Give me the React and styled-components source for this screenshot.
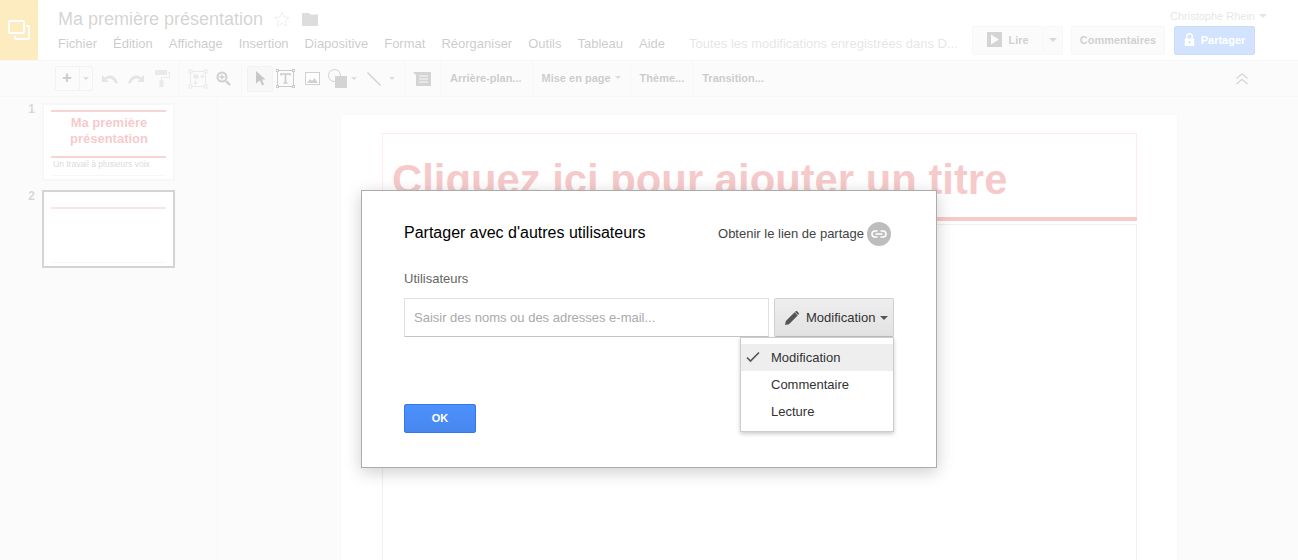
import React from "react";
import styled, { createGlobalStyle } from "styled-components";

const GlobalStyle = createGlobalStyle`
  html, body {
    margin: 0;
    height: 560px;
    overflow: hidden;
    background: #fff;
    font-family: "Liberation Sans", Arial, sans-serif;
  }
`;

const Page = styled.div`
  position: relative;
  width: 1298px;
  height: 560px;
  overflow: hidden;
`;

/* ---------- editor behind the dialog ---------- */

const Header = styled.header`
  display: flex;
  height: 60px;
  border-bottom: 1px solid #ddd;
  box-sizing: content-box;
`;

const Logo = styled.div`
  width: 38px;
  height: 60px;
  background: #f4b400;
  display: flex;
  align-items: center;
  justify-content: center;
`;

const TitleColumn = styled.div`
  margin-left: 20px;
  display: flex;
  flex-direction: column;
`;

const TitleRow = styled.div`
  display: flex;
  align-items: center;
  height: 20px;
  margin-top: 9px;
`;

const DocTitle = styled.div`
  font-size: 18px;
  color: #555;
`;

const MenuBar = styled.nav`
  display: flex;
  gap: 16px;
  margin-top: 7px;
  font-size: 13px;
  line-height: 16px;
  color: #333;
`;

const SavedNote = styled.span`
  margin-left: 8px;
  color: #999;
`;

const AccountColumn = styled.div`
  margin-left: auto;
  padding-right: 43px;
  display: flex;
  flex-direction: column;
  align-items: flex-end;
`;

const UserName = styled.div`
  display: flex;
  align-items: center;
  gap: 4px;
  height: 14px;
  margin-top: 9px;
  margin-right: -12px;
  font-size: 11px;
  color: #999;
`;

const Arrow = styled.span`
  display: inline-block;
  width: 0;
  height: 0;
  border-left: ${(p) => p.$size || 4}px solid transparent;
  border-right: ${(p) => p.$size || 4}px solid transparent;
  border-top: ${(p) => p.$size || 4}px solid ${(p) => p.$color || "#777"};
`;

const ActionRow = styled.div`
  display: flex;
  margin-top: 3px;
  font-size: 11px;
  font-weight: bold;
  color: #444;
`;

const ActionButton = styled.div`
  display: flex;
  align-items: center;
  justify-content: center;
  box-sizing: border-box;
  height: 29px;
  width: ${(p) => p.$w}px;
  margin-left: ${(p) => p.$ml || 0}px;
  padding-bottom: 2px;
  gap: 6px;
  border: 1px solid ${(p) => (p.$primary ? "#3079ed" : "#ddd")};
  border-left-width: ${(p) => (p.$joined ? 0 : 1)}px;
  border-radius: 2px;
  background: ${(p) => (p.$primary ? "#4d90fe" : "#eee")};
  color: ${(p) => (p.$primary ? "#fff" : "#444")};
`;

const Toolbar = styled.div`
  display: flex;
  align-items: center;
  height: 35px;
  background: #eee;
  border-bottom: 1px solid #ddd;
  padding-left: 55px;
`;

const Slot = styled.div`
  display: flex;
  align-items: center;
  justify-content: center;
  flex: none;
  width: ${(p) => p.$w}px;
  margin-left: ${(p) => p.$ml || 0}px;
`;

const Separator = styled.div`
  flex: none;
  width: 1px;
  height: 35px;
  background: #ddd;
  margin-left: ${(p) => p.$ml || 0}px;
`;

const NewSlide = styled.div`
  display: flex;
  flex: none;
  box-sizing: border-box;
  width: 38px;
  height: 25px;
  border: 1px solid #ccc;
  border-radius: 2px;
`;

const NewSlidePart = styled.div`
  display: flex;
  align-items: center;
  justify-content: center;
  box-sizing: border-box;
  width: ${(p) => p.$w}px;
  padding-right: ${(p) => (p.$divider ? 1 : 0)}px;
  padding-bottom: ${(p) => (p.$divider ? 1 : 0)}px;
  border-right: ${(p) => (p.$divider ? "1px solid #ccc" : "none")};
  font-size: 17px;
  font-weight: bold;
  color: #333;
`;

const SelectTool = styled.div`
  display: flex;
  align-items: center;
  justify-content: center;
  flex: none;
  box-sizing: border-box;
  width: 26px;
  height: 26px;
  margin-left: 5px;
  border: 1px solid #ccc;
  border-radius: 2px;
  background: #ddd;
`;

const ToolLabel = styled.div`
  flex: none;
  display: flex;
  align-items: center;
  gap: 4px;
  margin-left: ${(p) => p.$ml}px;
  margin-bottom: 2px;
  font-size: 11px;
  font-weight: bold;
  color: #333;
`;

const CollapseSlot = styled.div`
  margin-left: auto;
  margin-right: 50px;
  display: flex;
`;

const Workspace = styled.div`
  display: flex;
  height: 464px;
  background: #eee;
`;

const FilmStrip = styled.aside`
  box-sizing: border-box;
  width: 218px;
  flex: none;
  padding-top: 6px;
  border-right: 1px solid #ddd;
  display: flex;
  flex-direction: column;
  gap: 9px;
`;

const FilmRow = styled.div`
  display: flex;
`;

const SlideNumber = styled.div`
  width: 35px;
  text-align: right;
  margin-right: 7px;
  margin-top: -1px;
  font-size: 12px;
  line-height: 14px;
  font-weight: bold;
  color: #666;
`;

const Thumb = styled.div`
  box-sizing: border-box;
  width: 133px;
  height: 78px;
  background: #fff;
  border: 2px solid ${(p) => (p.$active ? "#555" : "#ddd")};
  padding: ${(p) => (p.$active ? 15 : 5)}px 7px 0;
  display: flex;
  flex-direction: column;
`;

const ThumbRule = styled.div`
  flex: none;
  height: 2px;
  background: #d92c2c;
  opacity: ${(p) => (p.$faint ? 0.5 : 0.8)};
`;

const ThumbTitle = styled.div`
  box-sizing: border-box;
  height: 44px;
  padding: 3px 0 0 1px;
  font-size: 13px;
  line-height: 16px;
  font-weight: bold;
  text-align: center;
  color: #dc2c2c;
`;

const ThumbSub = styled.div`
  font-size: 8.5px;
  line-height: 13px;
  margin-left: 2px;
  color: #666;
  white-space: nowrap;
`;

const ThumbFoot = styled.div`
  margin-top: auto;
  margin-bottom: 3px;
  height: 1px;
  background: #ddd;
`;

const Stage = styled.main`
  flex: 1;
  padding: 17px 120px 0 122px;
`;

const Slide = styled.div`
  height: 100%;
  box-sizing: border-box;
  background: #fff;
  padding: 18px 40px 0 41px;
  border: 1px solid #e4e4e4;
  border-bottom: none;
`;

const TitleBox = styled.div`
  box-sizing: border-box;
  height: 84px;
  padding: 21px 9px 0;
  border: 1px solid #f3b4b4;
  border-bottom: none;
  font-size: 41.8px;
  line-height: 50px;
  font-weight: bold;
  color: #dc2c2c;
  white-space: nowrap;
`;

const TitleRule = styled.div`
  height: 4px;
  background: #dc2c2c;
`;

const BodyBox = styled.div`
  box-sizing: border-box;
  height: 400px;
  margin-top: 3px;
  border: 1px solid #c4c4c4;
`;

const Veil = styled.div`
  position: absolute;
  inset: 0;
  background: rgba(255, 255, 255, 0.75);
`;

/* ---------- share dialog ---------- */

const Dialog = styled.section`
  position: absolute;
  left: 361px;
  top: 190px;
  box-sizing: border-box;
  width: 576px;
  height: 278px;
  padding: 31px 42px 0;
  background: #fff;
  border: 1px solid #acacac;
  box-shadow: 0 4px 16px rgba(0, 0, 0, 0.2);
`;

const DialogHead = styled.div`
  display: flex;
  align-items: center;
  justify-content: space-between;
  height: 24px;
  padding-right: 3px;
`;

const DialogTitle = styled.h2`
  margin: 0 0 3px;
  font-size: 16px;
  line-height: 20px;
  font-weight: normal;
  color: #000;
`;

const LinkAction = styled.div`
  display: flex;
  align-items: center;
  gap: 3px;
  font-size: 13px;
  color: #444;
`;

const LinkLabel = styled.span`
  margin-bottom: 2px;
`;

const LinkBadge = styled.div`
  width: 24px;
  height: 24px;
  border-radius: 50%;
  background: #bdbdbd;
  display: flex;
  align-items: center;
  justify-content: center;
`;

const FieldLabel = styled.div`
  margin-top: 25px;
  font-size: 13px;
  line-height: 16px;
  color: #666;
`;

const ShareRow = styled.div`
  display: flex;
  margin-top: 11px;
  gap: 5px;
`;

const PeopleInput = styled.div`
  box-sizing: border-box;
  width: 365px;
  height: 39px;
  padding-left: 9px;
  display: flex;
  align-items: center;
  border: 1px solid #e0e0e0;
  border-bottom-color: #c4c4c4;
  font-size: 13px;
  color: #aaa;
`;

const RoleButton = styled.div`
  box-sizing: border-box;
  width: 120px;
  height: 39px;
  padding-left: 10px;
  display: flex;
  align-items: center;
  border: 1px solid #d0d0d0;
  border-bottom-color: #bcbcbc;
  border-radius: 2px;
  background: linear-gradient(#eeeeee, #e2e2e2);
  font-size: 13px;
  color: #333;
`;

const RoleText = styled.span`
  margin-left: 7px;
  margin-right: 5px;
`;

const RoleMenu = styled.ul`
  position: absolute;
  left: 378px;
  top: 146px;
  box-sizing: border-box;
  width: 154px;
  height: 95px;
  margin: 0;
  padding: 6px 0 0;
  list-style: none;
  background: #fff;
  border: 1px solid #ccc;
  box-shadow: 0 2px 4px rgba(0, 0, 0, 0.2);
  font-size: 13px;
  color: #333;
`;

const RoleItem = styled.li`
  position: relative;
  height: 27px;
  line-height: 27px;
  padding-left: 30px;
  background: ${(p) => (p.$selected ? "#eeeeee" : "transparent")};

  svg {
    position: absolute;
    left: 5px;
    top: 6px;
  }
`;

const OkButton = styled.button`
  display: block;
  box-sizing: border-box;
  width: 72px;
  height: 29px;
  margin-top: 67px;
  padding: 0 0 1px;
  border: 1px solid #3079ed;
  border-radius: 2px;
  background: linear-gradient(#4d90fe, #4787ed);
  color: #fff;
  font-family: inherit;
  font-size: 11px;
  font-weight: bold;
`;

/* ---------- drawings ---------- */

const SlidesMark = () => (
  <svg width="22" height="20" viewBox="0 0 22 20" fill="none" stroke="#fff" strokeWidth="1.8" style={{ marginRight: 1 }}>
    <rect x="1" y="1" width="15" height="12" rx="1" />
    <path d="M18 6h2a1 1 0 0 1 1 1v11a1 1 0 0 1-1 1H8a1 1 0 0 1-1-1v-2" />
  </svg>
);

const StarIcon = () => (
  <svg width="16" height="16" viewBox="0 0 16 16" fill="none" stroke="#bbb" style={{ marginLeft: 11 }}>
    <path d="M8 1l2 5 5.4.4-4.1 3.5 1.3 5.3L8 12.3l-4.6 2.9 1.3-5.3L.6 6.4 6 6z" />
  </svg>
);

const FolderIcon = () => (
  <svg width="16" height="14" viewBox="0 0 16 14" fill="#777" style={{ marginLeft: 12 }}>
    <path d="M0 1h7l1.5 1.5H16V14H0z" />
  </svg>
);

const PlayIcon = () => (
  <svg width="15" height="15" viewBox="0 0 15 15">
    <rect width="15" height="15" fill="#555" />
    <path d="M4 2.5l8 5-8 5z" fill="#eee" />
  </svg>
);

const LockIcon = () => (
  <svg width="11" height="13" viewBox="0 0 11 13" fill="#fff">
    <path fillRule="evenodd" d="M2 5.5V3.6a3.5 3.5 0 0 1 7 0v1.9h1.2V13H.8V5.5zm1.500 0h4V3.6a2 2 0 0 0-4 0zM5.500 8a1.200 1.200 0 1 0 0 2.400 1.200 1.200 0 0 0 0-2.400z" />
  </svg>
);

const UndoIcon = ({ flip }) => (
  <svg width="16" height="10" viewBox="0 0 16 10" fill="#999" style={flip ? { transform: "scaleX(-1)" } : undefined}>
    <path d="M0 1v7h7L4.400 5.600C6.800 3.600 10.800 3.800 13.400 9.800L16 9C13.600 1.600 7.600-.2 3 3.400z" />
  </svg>
);

const PaintIcon = () => (
  <svg width="15" height="17" viewBox="0 0 15 17" fill="#aaa">
    <path d="M0 0h12v5H0zM13 2h2v6H7v2h1.500v7h-4v-7H6V7h8V3h-1z" />
  </svg>
);

const LayoutIcon = () => (
  <svg width="20" height="20" viewBox="0 0 20 20" fill="none" stroke="#aaa">
    <rect x="2.500" y="2.500" width="15" height="15" />
    <g fill="#eee">
      <rect x="1" y="1" width="3" height="3" />
      <rect x="16" y="1" width="3" height="3" />
      <rect x="1" y="16" width="3" height="3" />
      <rect x="16" y="16" width="3" height="3" />
    </g>
    <path d="M6 6h4v3H6zM12 7.500h4M14 5.500l2 2-2 2M7.500 11.500v4M5.500 13.500l2 2 2-2" fill="#aaa" />
  </svg>
);

const ZoomIcon = () => (
  <svg width="15" height="15" viewBox="0 0 15 15" fill="none" stroke="#444">
    <circle cx="6" cy="6" r="4.500" strokeWidth="2" />
    <path d="M10 10l4 4" strokeWidth="2.400" />
    <path d="M3.500 6h5M6 3.500v5" strokeWidth="1.400" />
  </svg>
);

const PointerIcon = () => (
  <svg width="11" height="15" viewBox="0 0 11 15" fill="#222">
    <path d="M1 0l9.500 8.500H7l2 5-2 1-2-5-4 3z" />
  </svg>
);

const TextBoxIcon = () => (
  <svg width="19" height="19" viewBox="0 0 19 19" fill="none" stroke="#333">
    <rect x="1.500" y="1.500" width="16" height="16" />
    <g fill="#fff">
      <rect x=".5" y=".5" width="2" height="2" />
      <rect x="16.500" y=".5" width="2" height="2" />
      <rect x=".5" y="16.500" width="2" height="2" />
      <rect x="16.500" y="16.500" width="2" height="2" />
    </g>
    <path d="M5 6.500V5h9v1.500M9.500 5v9M7.500 14h4" strokeWidth="1.600" />
  </svg>
);

const ImageIcon = () => (
  <svg width="15" height="13" viewBox="0 0 15 13">
    <rect x=".5" y=".5" width="14" height="12" fill="#fff" stroke="#444" />
    <path d="M2 11l3-4 2 2 2.500-3L13 11z" fill="#444" />
  </svg>
);

const ShapeIcon = () => (
  <svg width="19" height="19" viewBox="0 0 19 19">
    <rect x="7" y="7" width="12" height="12" fill="#555" />
    <circle cx="6.500" cy="6.500" r="6" fill="none" stroke="#444" />
  </svg>
);

const LineIcon = () => (
  <svg width="14" height="14" viewBox="0 0 14 14" stroke="#444" strokeWidth="1.300">
    <path d="M.5.5l13 13" />
  </svg>
);

const CommentIcon = () => (
  <svg width="18" height="14" viewBox="0 0 18 14">
    <path d="M0 0h18v14H3V3z" fill="#555" />
    <path d="M6 4h9M6 7h9M6 10h9" stroke="#eee" />
  </svg>
);

const CollapseIcon = () => (
  <svg width="12" height="12" viewBox="0 0 12 12" fill="none" stroke="#555" strokeWidth="1.200">
    <path d="M.5 5.500L6 .8l5.500 4.700M.5 11L6 6.300 11.500 11" />
  </svg>
);

const LinkIcon = () => (
  <svg width="16" height="8" viewBox="0 0 16 8" fill="none" stroke="#fff" strokeWidth="1.600">
    <path d="M6.500 1H4a3 3 0 0 0 0 6h2.500M9.500 1H12a3 3 0 0 1 0 6H9.500M4.500 4h7" />
  </svg>
);

const PencilIcon = () => (
  <svg width="14" height="14" viewBox="0 0 16 16" fill="#555">
    <path d="M0 16l1-4.500L11 1.500 14.500 5 4.500 15zM12 .5c.6-.6 1.500-.6 2 0l1.500 1.500c.6.600.6 1.400 0 2L15 4.500 11.500 1z" />
  </svg>
);

const CheckIcon = () => (
  <svg width="14" height="14" viewBox="0 0 14 14" fill="none" stroke="#555" strokeWidth="1.700">
    <path d="M1 7.500l3.500 3.500L13 2.500" />
  </svg>
);

const menuItems = ["Fichier", "Édition", "Affichage", "Insertion", "Diapositive", "Format", "Réorganiser", "Outils", "Tableau", "Aide"];

const App = () => {
  return (
    <Page>
      <GlobalStyle />
      <Header>
        <Logo>
          <SlidesMark />
        </Logo>
        <TitleColumn>
          <TitleRow>
            <DocTitle>Ma première présentation</DocTitle>
            <StarIcon />
            <FolderIcon />
          </TitleRow>
          <MenuBar>
            {menuItems.map((item) => (
              <span key={item}>{item}</span>
            ))}
            <SavedNote>Toutes les modifications enregistrées dans D...</SavedNote>
          </MenuBar>
        </TitleColumn>
        <AccountColumn>
          <UserName>
            Christophe Rhein
            <Arrow $color="#999" />
          </UserName>
          <ActionRow>
            <ActionButton $w={72}>
              <PlayIcon />
              Lire
            </ActionButton>
            <ActionButton $w={19} $joined>
              <Arrow $color="#666" />
            </ActionButton>
            <ActionButton $w={94} $ml={8}>Commentaires</ActionButton>
            <ActionButton $w={81} $ml={9} $primary>
              <LockIcon />
              Partager
            </ActionButton>
          </ActionRow>
        </AccountColumn>
      </Header>

      <Toolbar>
        <NewSlide>
          <NewSlidePart $w={24} $divider>+</NewSlidePart>
          <NewSlidePart $w={12}>
            <Arrow $size={3} $color="#777" />
          </NewSlidePart>
        </NewSlide>
        <Slot $w={16} $ml={9}><UndoIcon /></Slot>
        <Slot $w={16} $ml={10}><UndoIcon flip /></Slot>
        <Slot $w={15} $ml={11}><PaintIcon /></Slot>
        <Separator $ml={9} />
        <Slot $w={20} $ml={8}><LayoutIcon /></Slot>
        <Slot $w={15} $ml={8}><ZoomIcon /></Slot>
        <Separator $ml={10} />
        <SelectTool><PointerIcon /></SelectTool>
        <Slot $w={19} $ml={3}><TextBoxIcon /></Slot>
        <Slot $w={15} $ml={10}><ImageIcon /></Slot>
        <Slot $w={19} $ml={8}><ShapeIcon /></Slot>
        <Slot $w={6} $ml={4}><Arrow $size={3} $color="#777" /></Slot>
        <Slot $w={14} $ml={10}><LineIcon /></Slot>
        <Slot $w={6} $ml={8}><Arrow $size={3} $color="#777" /></Slot>
        <Separator $ml={9} />
        <Slot $w={18} $ml={8}><CommentIcon /></Slot>
        <Separator $ml={9} />
        <ToolLabel $ml={9}>Arrière-plan...</ToolLabel>
        <Separator $ml={10} />
        <ToolLabel $ml={9}>
          Mise en page
          <Arrow $size={3} $color="#777" />
        </ToolLabel>
        <Separator $ml={9} />
        <ToolLabel $ml={9}>Thème...</ToolLabel>
        <Separator $ml={8} />
        <ToolLabel $ml={9}>Transition...</ToolLabel>
        <CollapseSlot><CollapseIcon /></CollapseSlot>
      </Toolbar>

      <Workspace>
        <FilmStrip>
          <FilmRow>
            <SlideNumber>1</SlideNumber>
            <Thumb>
              <ThumbRule />
              <ThumbTitle>Ma première<br />présentation</ThumbTitle>
              <ThumbRule />
              <ThumbSub>Un travail à plusieurs voix</ThumbSub>
              <ThumbFoot />
            </Thumb>
          </FilmRow>
          <FilmRow>
            <SlideNumber>2</SlideNumber>
            <Thumb $active>
              <ThumbRule $faint />
              <ThumbFoot />
            </Thumb>
          </FilmRow>
        </FilmStrip>
        <Stage>
          <Slide>
            <TitleBox>Cliquez ici pour ajouter un titre</TitleBox>
            <TitleRule />
            <BodyBox />
          </Slide>
        </Stage>
      </Workspace>

      <Veil />

      <Dialog>
        <DialogHead>
          <DialogTitle>Partager avec d'autres utilisateurs</DialogTitle>
          <LinkAction>
            <LinkLabel>Obtenir le lien de partage</LinkLabel>
            <LinkBadge><LinkIcon /></LinkBadge>
          </LinkAction>
        </DialogHead>
        <FieldLabel>Utilisateurs</FieldLabel>
        <ShareRow>
          <PeopleInput>Saisir des noms ou des adresses e-mail...</PeopleInput>
          <RoleButton>
            <PencilIcon />
            <RoleText>Modification</RoleText>
            <Arrow $color="#555" />
          </RoleButton>
        </ShareRow>
        <OkButton>OK</OkButton>
        <RoleMenu>
          <RoleItem $selected><CheckIcon />Modification</RoleItem>
          <RoleItem>Commentaire</RoleItem>
          <RoleItem>Lecture</RoleItem>
        </RoleMenu>
      </Dialog>
    </Page>
  );
};

export default App;
